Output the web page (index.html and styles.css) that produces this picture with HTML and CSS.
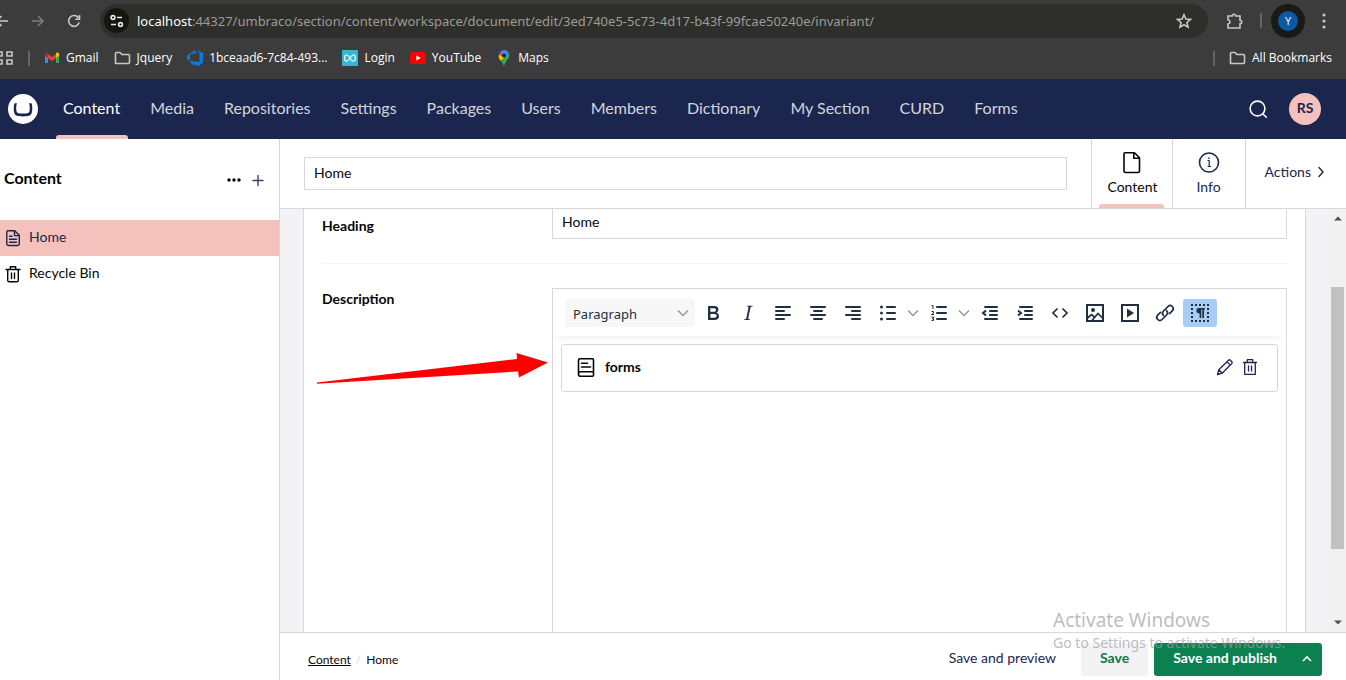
FILE: index.html
```html
<!DOCTYPE html>
<html lang="en">
<head>
<meta charset="utf-8">
<title>Home - Umbraco</title>
<link rel="stylesheet" href="styles.css">
</head>
<body>
<div class="app">
  <div class="browser">
    <div class="toolbar">
      <button class="chrome-btn back" aria-label="Back"><svg width="9" height="16" viewBox="7 0 9 16"><path d="M15 8H3M8.500 3 3.500 8l5 5"/></svg></button>
      <button class="chrome-btn forward" aria-label="Forward"><svg width="16" height="16" viewBox="0 0 16 16"><path d="M2 8h11M8 3l5 5-5 5"/></svg></button>
      <button class="chrome-btn reload" aria-label="Reload"><svg width="16" height="16" viewBox="0 0 16 16"><path d="M13.200 9.500A5.400 5.400 0 1 1 12.600 5M13.500 2v4.200H9.300"/></svg></button>
      <div class="address">
        <span class="site-info"><svg width="14" height="14" viewBox="0 0 14 14"><circle cx="3" cy="3.500" r="1.900"/><path d="M7 3.500h5M1 10.500h5"/><circle cx="10.500" cy="10.500" r="1.900"/></svg></span>
        <span class="url"><b>localhost</b>:44327/umbraco/section/content/workspace/document/edit/3ed740e5-5c73-4d17-b43f-99fcae50240e/invariant/</span>
        <button class="chrome-btn" aria-label="Bookmark this tab"><svg width="16" height="16" viewBox="0 0 16 16"><path d="m8 1.700 1.900 4.300 4.600.4-3.500 3.100 1 4.600L8 11.700l-4 2.400 1-4.600-3.500-3.100 4.600-.4z"/></svg></button>
      </div>
      <button class="chrome-btn ext" aria-label="Extensions"><svg width="18" height="18" viewBox="0 0 18 18"><path d="M2 4h4.200a1.700 1.700 0 0 1 3.400 0H14v4.200a1.600 1.600 0 0 1 0 3.400V16H2v-4c2.700-.6 2.700-3.600 0-4.200z"/></svg></button>
      <span class="chrome-sep"></span>
      <button class="profile" aria-label="Profile"><span>Y</span></button>
      <button class="chrome-btn more" aria-label="Menu"><svg width="4" height="16" viewBox="0 0 4 16"><g class="solid"><circle cx="2" cy="2" r="1.600"/><circle cx="2" cy="8" r="1.600"/><circle cx="2" cy="14" r="1.600"/></g></svg></button>
    </div>
    <div class="bookmarks">
      <svg class="line apps" width="13" height="14" viewBox="3 0 13 14"><path d="M0 1h5v4H0zM10 1h5v4h-5zM0 9h5v4H0zM10 9h5v4h-5z"/></svg>
      <span class="chrome-sep"></span>
      <a href="#"><svg width="16" height="16" viewBox="0 0 16 16"><path fill="#4285f4" d="M1 5v8h3V7z"/><path fill="#34a853" d="M15 5v8h-3V7z"/><path fill="#ea4335" d="M4 8V4l4 3 4-3v4l-4 3z"/><path fill="#c5221f" d="M1 6V4c0-1.700 1.800-2 3-1v5z"/><path fill="#fbbc04" d="M15 6V4c0-1.700-1.800-2-3-1v5z"/></svg>Gmail</a>
      <a href="#"><svg class="line" width="17" height="16" viewBox="0 0 17 16"><path d="M1.500 13.500v-10q0-1 1-1H6l2 2h6.500q1 0 1 1v7q0 1-1 1z"/></svg>Jquery</a>
      <a href="#"><svg width="16" height="16" viewBox="0 0 16 16"><path fill="#0a7bdc" d="M0 6 1.500 4 6 2.200V0l4.500 3L3 4.500v6L.0 9.500zM16 3v9.500L12 16l-6-2v2l-3.500-5 10 1V3.500L10 0z"/></svg>1bceaad6-7c84-493...</a>
      <a href="#"><svg width="16" height="16" viewBox="0 0 16 16"><path fill="#35b8cf" d="M0 0h16v16H0z"/><path fill="none" stroke="#d9f5fa" stroke-width="1.300" d="M8 8C6.500 5 5.800 4.800 4.800 4.800 1.800 4.800 1.800 11.200 4.800 11.200 7.500 11.200 8.500 4.800 11.200 4.800 14.200 4.800 14.200 11.200 11.200 11.200 10 11.200 9 10 8 8z"/></svg>Login</a>
      <a href="#"><svg width="16" height="16" viewBox="0 0 16 16"><rect y="2" width="16" height="12" rx="3" fill="#f00"/><path fill="#fff" d="m6.300 5.500 4.500 2.500-4.500 2.500z"/></svg>YouTube</a>
      <a href="#"><svg width="16" height="16" viewBox="0 0 16 16"><path fill="#34a853" d="M3.500 8 13 3.500c1 3-.5 5-2 6.700C9.500 12 9 14 8.300 15.500c-.2.500-.6.500-.8 0C7 14 6 12 4.500 10z"/><path fill="#fbbc04" d="M3 4.500 2.700 6c0 2 .8 3.300 2.100 4.800L10 5z"/><path fill="#ea4335" d="M4 2.200 3 4.500l3 2L8 4z"/><path fill="#4285f4" d="M4 2.200C6.500-1 11.500-.5 13 3.500L9.500 7 6.500 5z"/><circle cx="8" cy="5.500" r="1.900" fill="#223"/></svg>Maps</a>
      <span class="chrome-sep push"></span>
      <a class="all" href="#"><svg class="line" width="17" height="16" viewBox="0 0 17 16"><path d="M1.500 13.500v-10q0-1 1-1H6l2 2h6.500q1 0 1 1v7q0 1-1 1z"/></svg>All Bookmarks</a>
    </div>
  </div>

  <header class="header">
    <a class="logo" href="#" aria-label="Umbraco"><svg width="30" height="30" viewBox="0 0 30 30"><circle cx="15" cy="15" r="15" fill="#fff"/><path fill="#1b264f" d="m6.500 9.400 1.900-.3c.3 0 .4.1.3.4-.6 3.600-.7 6.200 0 8.200.5 1.500 2.200 1.900 6.300 1.900s5.800-.4 6.300-1.900c.7-2 .6-4.600 0-8.200 0-.3.100-.4.300-.4l1.900.3c.3 0 .3.200.3.400.7 4 .6 7-.1 9.300-.8 2.600-3.300 3.400-8.700 3.400s-7.900-.8-8.700-3.400c-.7-2.300-.8-5.300-.1-9.300 0-.2.100-.4.300-.4z"/></svg></a>
    <nav class="sections">
      <a class="active" href="#">Content</a><a href="#">Media</a><a href="#">Repositories</a><a href="#">Settings</a><a href="#">Packages</a><a href="#">Users</a><a href="#">Members</a><a href="#">Dictionary</a><a href="#">My Section</a><a href="#">CURD</a><a href="#">Forms</a>
    </nav>
    <button class="search" aria-label="Search"><svg width="20" height="20" viewBox="0 0 20 20"><circle cx="9.500" cy="9.500" r="7.400"/><path d="m15 15 3.300 3.300"/></svg></button>
    <button class="avatar">RS</button>
  </header>

  <div class="body">
    <aside class="sidebar">
      <div class="side-head">
        <h2>Content</h2>
        <button aria-label="More actions"><svg width="16" height="16" viewBox="0 0 16 16"><circle cx="3" cy="8" r="1.700"/><circle cx="8" cy="8" r="1.700"/><circle cx="13" cy="8" r="1.700"/></svg></button>
        <button aria-label="Create"><svg class="ico" width="16" height="16" viewBox="0 0 16 16"><path d="M3 8.500h10M8 3.500v10"/></svg></button>
      </div>
      <a class="tree-item selected" href="#"><svg class="ico" width="16" height="18" viewBox="0 0 16 18"><path d="M2.700 1.700h7l4.600 4.600v8.500q0 1.700-1.700 1.700H3.500q-1.700 0-1.700-1.700V3.300q0-1.600 1.200-1.600zM9.500 2v4.600h4.600M4.500 7.200H7M4.500 10.300h7M4.500 13.300h7"/></svg><span>Home</span></a>
      <a class="tree-item" href="#"><svg class="ico" width="16" height="18" viewBox="0 0 16 18"><path d="M1 4.500h14M5.300 4.300V1.700h5.400v2.600M2.700 4.700v10.500q0 1.600 1.600 1.600h7.400q1.600 0 1.600-1.600V4.700M6.500 8v5.500M9.500 8v5.500"/></svg><span>Recycle Bin</span></a>
    </aside>

    <main class="workspace">
      <div class="ws-head">
        <input class="name" type="text" value="Home" aria-label="Document name">
        <nav class="views">
          <a class="view active" href="#"><svg class="ico" width="24" height="24" viewBox="0 0 24 24"><path d="M5 1.800h9.500l5 5V20q0 1.500-1.500 1.500H5.500Q4 21.500 4 20V3q0-1.200 1-1.200zM13.800 2v5.300h5.600"/></svg>Content</a>
          <a class="view" href="#"><svg class="ico" width="24" height="24" viewBox="0 0 24 24"><circle cx="12" cy="11.500" r="9.500"/><path stroke-width="1.200" d="M11 9.500h1.200v6M11 15.500h2.500M12 6.700v1"/></svg>Info</a>
        </nav>
        <button class="actions">Actions <svg class="ico" width="8" height="12" viewBox="0 0 8 12"><path d="m2 1.500 4 4.500-4 4.500"/></svg></button>
      </div>

      <div class="scroller">
        <div class="canvas">
          <div class="box">
            <div class="property heading">
              <label for="heading">Heading</label>
              <input id="heading" type="text" value="Home">
            </div>
            <div class="property description">
              <div class="prop-label">Description</div>
              <svg class="pointer" width="234" height="34" viewBox="0 0 234 34"><path fill="#f00" d="M1 30.500 201 7 200.500 1 232 10.500 203 25.500 202 19.500 1 31.800z"/></svg>
              <div class="editor">
                <div class="rte-bar">
                  <div class="format"><select aria-label="Block format"><option>Paragraph</option></select><svg class="chev" width="12" height="8" viewBox="0 0 12 8"><path d="m1 1.500 5 5 5-5"/></svg></div>
                  <button aria-label="Bold"><svg width="24" height="24" viewBox="0 0 24 24"><path d="M7.800 19c-.3 0-.5 0-.6-.2l-.2-.5V5.700c0-.2 0-.4.2-.5l.6-.2h5c1.500 0 2.700.3 3.500 1 .7.600 1.100 1.400 1.100 2.500a3 3 0 0 1-.6 1.900c-.4.600-1 1-1.600 1.200.4.100.9.300 1.300.6s.8.700 1 1.200c.4.400.5 1 .5 1.600 0 1.300-.4 2.300-1.300 3-.8.700-2.100 1-3.800 1zm5-8.300c.6 0 1.200-.1 1.600-.5.4-.3.600-.7.600-1.300 0-1.100-.8-1.700-2.300-1.700H9.300v3.500zm.5 6c.7 0 1.300-.1 1.700-.4.4-.4.600-.9.600-1.500s-.2-1-.7-1.400c-.4-.3-1-.4-2-.4H9.400v3.800z"/></svg></button>
                  <button aria-label="Italic"><svg width="24" height="24" viewBox="0 0 24 24"><path d="m16.700 4.700-.1.900h-.3c-.6 0-1 0-1.400.3-.3.300-.4.600-.5 1.100l-2.100 9.800v.6c0 .5.400.8 1.400.8h.2l-.2.800H8l.2-.8h.2c1.100 0 1.800-.5 2-1.500l2-9.800.1-.5c0-.6-.4-.8-1.400-.8h-.3l.2-.9z"/></svg></button>
                  <button aria-label="Align left"><svg width="24" height="24" viewBox="0 0 24 24"><path class="row" d="M5 6h14M5 10h8M5 14h14M5 18h8"/></svg></button>
                  <button aria-label="Align center"><svg width="24" height="24" viewBox="0 0 24 24"><path class="row" d="M5 6h14M8 10h8M5 14h14M8 18h8"/></svg></button>
                  <button aria-label="Align right"><svg width="24" height="24" viewBox="0 0 24 24"><path class="row" d="M5 6h14M11 10h8M5 14h14M11 18h8"/></svg></button>
                  <button aria-label="Bullet list"><svg width="24" height="24" viewBox="0 0 24 24"><path class="row" d="M11 6h8M11 12h8M11 18h8"/><circle cx="5.500" cy="6" r="1.500"/><circle cx="5.500" cy="12" r="1.500"/><circle cx="5.500" cy="18" r="1.500"/></svg></button>
                  <button class="split" aria-label="Bullet list options"><svg class="chev" width="12" height="8" viewBox="0 0 12 8"><path d="m1 1.500 5 5 5-5"/></svg></button>
                  <button aria-label="Numbered list"><svg width="24" height="24" viewBox="0 0 24 24"><path class="row" d="M10 6h9M10 12h9M10 18h9"/><path class="thin" d="M4.500 4.500H6V8M4.500 10.500H6.500V12L4.500 13.500H7M4.500 16H6.500v3.500h-2M5 17.800h1.500"/></svg></button>
                  <button class="split" aria-label="Numbered list options"><svg class="chev" width="12" height="8" viewBox="0 0 12 8"><path d="m1 1.500 5 5 5-5"/></svg></button>
                  <button aria-label="Decrease indent"><svg width="24" height="24" viewBox="0 0 24 24"><path class="row" d="M7 6h12M12 10h7M12 14h7M7 18h12"/><path class="mid" d="M8 9.500 5 12l3 2.500"/></svg></button>
                  <button aria-label="Increase indent"><svg width="24" height="24" viewBox="0 0 24 24"><path class="row" d="M7 6h12M12 10h7M12 14h7M7 18h12"/><path class="mid" d="M5 9.500 8 12l-3 2.500"/></svg></button>
                  <button aria-label="Source code"><svg width="24" height="24" viewBox="0 0 24 24"><path class="code" d="M9.500 7.500 5 12l4.500 4.500M14.500 7.500 19 12l-4.500 4.500"/></svg></button>
                  <button aria-label="Insert image"><svg width="24" height="24" viewBox="0 0 24 24"><path class="mid" d="M4 4h16v16H4z"/><path class="code" d="m4.500 17 4-3.500 3.500 3M9 19.500l6-7 4.500 4.500"/><circle cx="10" cy="9" r="2"/></svg></button>
                  <button aria-label="Embed media"><svg width="24" height="24" viewBox="0 0 24 24"><path class="mid" d="M4 4h16v16H4z"/><path d="m9 7.500 7 4.500-7 4.500z"/></svg></button>
                  <button aria-label="Link"><svg width="24" height="24" viewBox="0 0 24 24"><path class="link" d="M10.500 14.500C8.800 12.800 9.500 11 10.500 10L15 5.500a3 3 0 0 1 4.300 4.300l-2.800 2.800M13.500 9.500c1.700 1.700 1 3.500 0 4.500L9 18.500a3 3 0 0 1-4.300-4.300l2.800-2.800"/></svg></button>
                  <button class="on" aria-label="Show blocks"><svg width="24" height="24" viewBox="0 0 24 24"><path class="dots" d="M3 4h18M3 20h18M4 7v12M20 7v12"/><path d="M10.700 7H17v1.500h-1V17h-1.700V8.500h-1V17h-1.700v-4.500C7.500 12.500 7.500 7 10.700 7z"/></svg></button>
                </div>
                <div class="block">
                  <svg class="ico" width="18" height="20" viewBox="1 0 18 20"><path d="M4 1.800h12.500q1 0 1 1v15.400q0 1-1 1H4.500q-2 0-2-2V3.300q0-1.500 1.500-1.500zM2.700 16q.3-1.300 1.800-1.300h13M5.500 6.300h6M5.500 10h9"/></svg>
                  <strong>forms</strong>
                  <button aria-label="Edit"><svg class="ico" width="18" height="18" viewBox="0 0 18 18"><path d="m1.500 16.500 1.300-4.700L12.500 2.200q.9-.8 1.800 0l1.500 1.500q.8.900 0 1.800L6.200 15.200zM2.800 11.800l3.400 3.400M10.900 3.800l3.300 3.300"/></svg></button>
                  <button aria-label="Delete"><svg class="ico" width="16" height="18" viewBox="0 0 16 18"><path d="M1.500 4.500h13M5.300 4.300V1.700h5.400v2.600M2.700 4.700V16.300h10.600V4.700M6.500 8v5M9.500 8v5"/></svg></button>
                </div>
              </div>
            </div>
          </div>
        </div>
        <div class="scrollbar"><svg width="8" height="5" viewBox="0 0 8 5"><path d="m0 4.500 4-4 4 4z"/></svg><span class="track"><span class="thumb"></span></span><svg width="8" height="5" viewBox="0 0 8 5"><path d="m0 .5 4 4 4-4z"/></svg></div>
      </div>

      <footer class="ws-foot">
        <nav class="crumbs"><a href="#">Content</a><span class="slash">/</span><span>Home</span></nav>
        <button class="preview">Save and preview</button>
        <button class="save">Save</button>
        <div class="publish"><button>Save and publish</button><button class="caret" aria-label="More publish options"><svg width="12" height="8" viewBox="0 0 12 8"><path d="m2 6 4-4 4 4"/></svg></button></div>
      </footer>
    </main>
  </div>
  <div class="watermark"><div class="wm-title">Activate Windows</div><div>Go to Settings to activate Windows.</div></div>
</div>
</body>
</html>
```
FILE: styles.css
```css
* { box-sizing: border-box; }
body { margin: 0; font: 15px/20px Lato, sans-serif; color: #060606; }
button { border: 0; padding: 0; background: none; font: inherit; color: inherit; display: flex; align-items: center; justify-content: center; }
a { color: inherit; text-decoration: none; }
input, select { font: inherit; color: inherit; }
svg { flex: none; display: block; }
.app { position: relative; height: 100vh; display: flex; flex-direction: column; overflow: hidden; }
.ico { fill: none; stroke: currentColor; stroke-width: 1.4; stroke-linejoin: round; stroke-linecap: round; }

/* Browser chrome */
.browser { height: 79px; flex: none; background: #3c3c3c; color: #fff; font: 12px/16px "Open Sans", sans-serif; }
.toolbar { display: flex; align-items: center; height: 41px; padding-right: 20px; }
.chrome-btn svg, .line { fill: none; stroke: #c7c7c7; stroke-width: 1.6; }
.chrome-btn .solid { fill: #c7c7c7; stroke: none; }
.forward { margin-left: 21px; }
.forward svg { stroke: #7d7d7d; }
.reload { margin: 0 18px 0 20px; }
.address { flex: 1; height: 34px; border-radius: 17px; background: #2e2e2a; display: flex; align-items: center; padding: 0 16px 0 4px; }
.site-info { width: 25px; height: 25px; border-radius: 50%; background: #161611; display: flex; align-items: center; justify-content: center; }
.site-info svg { fill: none; stroke: #e8e8e8; stroke-width: 1.6; }
.url { flex: 1; margin-left: 8px; font: 13px/18px "Noto Sans", sans-serif; color: #9c9c99; white-space: nowrap; overflow: hidden; }
.url b { font-weight: 400; color: #fff; }
.ext { margin-left: 18px; }
.chrome-sep { width: 2px; height: 15px; background: #656565; margin: 0 9px 0 16px; }
.profile { width: 34px; height: 34px; border-radius: 50%; background: #191915; }
.profile span { width: 20px; height: 20px; border-radius: 50%; background: #0b5aa6; font-size: 11px; line-height: 20px; }
.more { margin-left: 17px; }
.bookmarks { display: flex; align-items: center; height: 34px; padding-right: 14px; gap: 15px; }
.bookmarks .chrome-sep { margin: 0; }
.bookmarks .chrome-sep + a { margin-left: -1px; }
.bookmarks .push { margin-left: auto; }
.bookmarks a { display: flex; align-items: center; gap: 6px; }

/* Section header */
.header { flex: none; height: 60px; background: #1b264f; display: flex; align-items: center; padding: 0 25px 0 8px; color: #fff; }
.sections { display: flex; flex: 1; margin-left: 10px; height: 60px; font-size: 16px; }
.sections a { display: flex; align-items: center; padding: 0 15px 2px; color: #d2d4dc; position: relative; }
.sections .active { color: #fff; }
.sections .active::after { content: ""; position: absolute; left: 8px; right: 7px; bottom: 0; height: 4px; background: #f5c1bc; border-radius: 3px 3px 0 0; }
.search svg { fill: none; stroke: #fff; stroke-width: 1.6; stroke-linecap: round; }
.avatar { width: 32px; height: 32px; border-radius: 50%; background: #f5c1bc; color: #1b264f; font-size: 14px; font-weight: 700; margin-left: 21px; padding-bottom: 2px; }

.body { flex: 1; min-height: 0; display: flex; }
.sidebar { width: 280px; flex: none; border-right: 1px solid #d8d7d9; background: #fff; font-size: 14px; }
.side-head { display: flex; align-items: center; gap: 8px; height: 81px; padding: 0 13px 0 4px; }
.side-head h2 { flex: 1; margin: 0; padding-bottom: 4px; font-size: 16px; line-height: 20px; }
.side-head .ico { color: #3b4468; }
.tree-item { display: flex; align-items: center; gap: 8px; height: 36px; padding: 0 5px; }
.tree-item span { padding-bottom: 2px; }
.tree-item.selected { background: #f5c1bc; color: #1b264f; }

/* Workspace */
.workspace { flex: 1; min-width: 0; display: flex; flex-direction: column; background: #fff; }
.ws-head { height: 70px; flex: none; display: flex; align-items: center; border-bottom: 1px solid #d8d7d9; padding-left: 24px; }
.name { flex: 1; min-width: 0; height: 33px; border: 1px solid #d8d7d9; padding: 0 9px 2px; margin-right: 24px; font-size: 14px; }
.views { display: flex; height: 69px; font-size: 14px; color: #1b264f; }
.view { position: relative; border-left: 1px solid #d8d7d9; padding: 12px 15px 0; display: flex; flex-direction: column; align-items: center; gap: 2px; }
.view:last-child { padding: 12px 24px 0 23px; }
.view .ico { stroke-width: 1.6; }
.view.active { color: #060606; }
.view.active::after { content: ""; position: absolute; left: 7px; right: 8px; bottom: 0; height: 4px; background: #f5c1bc; border-radius: 3px 3px 0 0; }
.actions { height: 69px; border-left: 1px solid #d8d7d9; padding: 0 21px 4px 19px; gap: 6px; font-size: 14px; color: #1b264f; }

.scroller { flex: 1; min-height: 0; display: flex; background: #f3f3f5; }
.canvas { flex: 1; min-width: 0; overflow: hidden; padding: 0 23px; display: flex; }
.box { flex: 1; min-width: 0; background: #fff; border: solid #d8d7d9; border-width: 0 1px; padding: 0 18px; display: flex; flex-direction: column; }
.property { display: flex; position: relative; font-size: 14px; }
.property label, .prop-label { width: 230px; flex: none; font-weight: 700; }
.heading { height: 55px; border-bottom: 1px solid #f3f3f5; }
.heading label { padding-top: 7px; }
.heading input { flex: 1; min-width: 0; height: 30px; border: 1px solid #d8d7d9; border-top: 0; padding: 0 9px 5px; background: #fff; }
.description { flex: 1; padding-top: 24px; min-height: 0; }
.prop-label { padding-top: 1px; }
.pointer { position: absolute; left: -6px; top: 88px; }
.editor { flex: 1; min-width: 0; border: 1px solid #d8d7d9; border-bottom: 0; }
.rte-bar { height: 47px; margin: 0 3px; padding: 0 9px; display: flex; align-items: center; gap: 1px; box-shadow: 0 5px 5px -2px #0000000d; }
.rte-bar button { width: 34px; height: 28px; border-radius: 3px; }
.rte-bar button.on { background: #a6ccf7; }
.rte-bar button.split { width: 16px; margin-left: -1px; }
.rte-bar svg { fill: #222f3e; }
.rte-bar .chev { fill: none; stroke: #9299a0; stroke-width: 1.5; }
.rte-bar .row, .rte-bar .mid, .rte-bar .thin, .rte-bar .link, .rte-bar .dots, .rte-bar .code { fill: none; stroke: #222f3e; }
.rte-bar .row { stroke-width: 2; stroke-linecap: round; }
.rte-bar .mid { stroke-width: 2; }
.rte-bar .code { stroke-width: 1.7; }
.rte-bar .thin { stroke-width: 1; }
.rte-bar .link { stroke-width: 1.7; stroke-linecap: round; }
.rte-bar .dots { stroke-width: 2; stroke-dasharray: 2 2; }
.format { position: relative; width: 130px; }
.format select { appearance: none; width: 100%; height: 28px; border: 0; border-radius: 3px; background: #f7f7f7; padding: 2px 8px 0; font: 13px/18px "Noto Sans", sans-serif; color: #222f3e; }
.format .chev { position: absolute; right: 6px; top: 10px; }
.block { margin: 8px 8px 0; height: 48px; border: 1px solid #d8d7d9; border-radius: 3px; display: flex; align-items: center; padding: 0 19px 2px 15px; background: #fff; }
.block strong { flex: 1; margin-left: 10px; }
.block button { margin-left: 8px; color: #1b264f; }
.block .ico { stroke-width: 1.3; }
.block > .ico { stroke-width: 1.6; }
.scrollbar { width: 17px; background: #f1f1f1; display: flex; flex-direction: column; align-items: center; padding: 7px 0; fill: #505050; }
.track { flex: 1; display: flex; flex-direction: column; padding: 66px 0 71px; }
.thumb { flex: 1; width: 13px; background: #c1c1c1; }

.ws-foot { flex: none; height: 48px; border-top: 1px solid #d8d7d9; display: flex; align-items: flex-start; padding: 10px 24px 0 28px; font-size: 14px; }
.crumbs { flex: 1; font-size: 12px; line-height: 34px; }
.crumbs a { text-decoration: underline; }
.slash { margin: 0 5px; color: #d8d7d9; }
.ws-foot button { height: 33px; padding-bottom: 4px; }
.preview { color: #1b264f; margin-right: 25px; }
.ws-foot .save { background: #f3f3f5; color: #0b7a4b; font-weight: 700; padding: 0 19px 4px; border-radius: 3px; margin-right: 6px; }
.publish { display: flex; background: #0b8152; color: #fff; font-weight: 700; border-radius: 3px; padding-left: 19px; }
.ws-foot .caret { padding: 0 9px 2px 24px; }
.caret svg { fill: none; stroke: #fff; stroke-width: 1.6; }

.watermark { position: absolute; right: 57px; bottom: 26px; width: 236px; font: 14px/22px "Noto Sans", sans-serif; color: #a0a0a0b3; white-space: nowrap; pointer-events: none; }
.wm-title { font-size: 19px; line-height: 24px; }
```
